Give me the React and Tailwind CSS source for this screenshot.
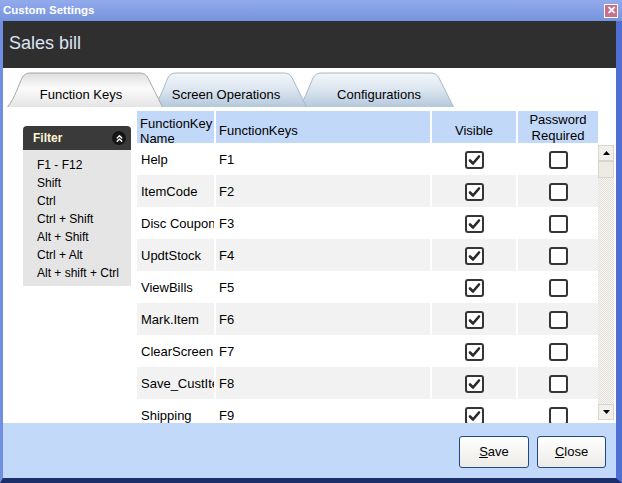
import { ChevronsUp } from 'lucide-react';

const font = { fontFamily: '"Liberation Sans", Arial, sans-serif' };

const rows = [
  ['Help', 'F1'],
  ['ItemCode', 'F2'],
  ['Disc Coupon', 'F3'],
  ['UpdtStock', 'F4'],
  ['ViewBills', 'F5'],
  ['Mark.Item', 'F6'],
  ['ClearScreen', 'F7'],
  ['Save_CustItem', 'F8'],
  ['Shipping', 'F9'],
];

const filters = ['F1 - F12', 'Shift', 'Ctrl', 'Ctrl + Shift', 'Alt + Shift', 'Ctrl + Alt', 'Alt + shift + Ctrl'];

const Tab = ({ label, active, className, textClass }) => (
  <div className={`relative h-[35px] ${className}`}>
    <svg className="absolute inset-0" width="100%" height="35" viewBox="0 0 156 35" preserveAspectRatio="none">
      <defs>
        <linearGradient id={active ? 'ta' : 'ti'} x1="0" y1="0" x2="0" y2="1">
          {active ? (
            <>
              <stop offset="0" stopColor="#dedede" />
              <stop offset="0.45" stopColor="#fbfbfb" />
              <stop offset="1" stopColor="#e4e4e4" />
            </>
          ) : (
            <>
              <stop offset="0" stopColor="#f2f6fa" />
              <stop offset="0.5" stopColor="#dbe5ef" />
              <stop offset="1" stopColor="#b4c8dc" />
            </>
          )}
        </linearGradient>
      </defs>
      <path
        d="M0.5 35 C8 26 12 12 15 6 Q17.5 1 23 1 L133 1 Q138.5 1 141 6 L155.5 35"
        fill={`url(#${active ? 'ta' : 'ti'})`}
        stroke={active ? '#a8a8a8' : '#a7b6c6'}
        strokeWidth="1"
      />
    </svg>
    <div className={`relative flex h-full items-end justify-center pb-[3px] text-[13px] text-black ${textClass}`}>{label}</div>
  </div>
);

const Check = ({ checked }) => (
  <div className="flex h-[18px] w-[19px] items-center justify-center rounded-[3px] border-[2.5px] border-[#353535] bg-white">
    {checked && (
      <svg width="13" height="12" viewBox="0 0 13 12">
        <path d="M2 6.5 L5 9.5 L11 2.5" fill="none" stroke="#2a2a2a" strokeWidth="2.6" strokeLinecap="round" strokeLinejoin="round" />
      </svg>
    )}
  </div>
);

const Arrow = ({ up }) => (
  <div className="flex h-[16px] w-[16px] items-center justify-center border border-[#d8d6cc] bg-[#f1f0ea]">
    <svg width="7" height="4" viewBox="0 0 7 4">
      <path d={up ? 'M0 4 L3.5 0 L7 4 Z' : 'M0 0 L3.5 4 L7 0 Z'} fill="#000" />
    </svg>
  </div>
);

const Btn = ({ children, w }) => (
  <button className={`flex h-[32px] ${w} items-center justify-center rounded-[3px] border border-[#1d4a80] bg-gradient-to-b from-[#ffffff] to-[#ecebe6] text-[13px] text-black`}>
    {children}
  </button>
);

export default function App() {
  return (
    <div className="flex h-[483px] w-[622px] flex-col bg-[#7b98e0]" style={font}>
      {/* title bar */}
      <div className="flex h-[21px] shrink-0 items-center justify-between bg-gradient-to-b from-[#92abec] to-[#7693dd] pl-[3px] pr-[4px]">
        <span className="text-[11.5px] font-bold text-white">Custom Settings</span>
        <div className="flex h-[14px] w-[14px] items-center justify-center border border-white bg-[#c7708e] text-[11px] font-bold leading-none text-white">✕</div>
      </div>

      <div className="flex flex-1 flex-col border-b-[5px] border-l-[3px] border-r-[6px] border-b-[#1c2f6a] border-l-[#6f90e2] border-r-[#4f6fd3]">
        {/* header band */}
        <div className="flex h-[47px] shrink-0 items-center bg-[#2f2f2f] pl-[6px] pb-[2px]">
          <span className="text-[18px] text-[#dde4f3]">Sales bill</span>
        </div>

        {/* main */}
        <div className="flex h-[355px] flex-col bg-white">
          <div className="flex h-[39px] shrink-0 items-end pl-[4px]">
            <Tab label="Function Keys" active className="z-20 w-[156px]" textClass="pr-[8px]" />
            <Tab label="Screen Operations" className="z-10 -ml-[10px] w-[154px]" textClass="pr-[8px]" />
            <Tab label="Configurations" className="z-0 -ml-[9px] w-[156px]" textClass="pl-[6px]" />
          </div>

          <div className="flex flex-1 overflow-hidden">
            {/* filter panel */}
            <div className="ml-[20px] mt-[19px] w-[108px] shrink-0 self-start">
              <div className="flex h-[24px] items-center justify-between rounded-t-[4px] bg-[#3a3a3a] pl-[10px] pr-[5px]">
                <span className="text-[12px] font-bold text-[#fff6d8]">Filter</span>
                <div className="flex h-[14px] w-[14px] items-center justify-center rounded-full bg-[#151515]">
                  <ChevronsUp size={11} strokeWidth={3} color="#ffffff" />
                </div>
              </div>
              <div className="flex h-[136px] flex-col bg-[#e5e5e5] pl-[14px] pt-[6px] text-[12px] leading-[18px] text-black">
                {filters.map((f) => (
                  <span key={f}>{f}</span>
                ))}
              </div>
            </div>

            {/* grid */}
            <div className="ml-[6px] mt-[4px] flex w-[477px] flex-col">
              <div className="flex h-[32px] shrink-0 bg-[#c2d8f8] text-[13px] leading-[15px] text-black">
                <div className="w-[79px] overflow-hidden border-r-2 border-white pl-[3px] pt-[5px]">FunctionKey Name</div>
                <div className="flex w-[216px] items-center border-r-2 border-white pl-[3px] pt-[7px]">FunctionKeys</div>
                <div className="flex w-[86px] items-center justify-center border-r-2 border-white pt-[7px]">Visible</div>
                <div className="flex w-[80px] flex-col items-center justify-center pt-[1px] leading-[16px]">
                  <span>Password</span>
                  <span>Required</span>
                </div>
                <div className="w-[16px] bg-white" />
              </div>
              <div className="flex flex-1 overflow-hidden">
                <div className="flex w-[461px] flex-col overflow-hidden">
                  {rows.map(([name, key], i) => (
                    <div key={name} className={`flex h-[32px] shrink-0 text-[13px] text-black ${i % 2 ? 'bg-[#f2f2f2]' : 'bg-white'}`}>
                      <div className="flex w-[79px] items-center overflow-hidden whitespace-nowrap border-r-2 border-white pl-[4px] pt-[2px]">{name}</div>
                      <div className="flex w-[216px] items-center border-r-2 border-white pl-[3px] pt-[2px]">{key}</div>
                      <div className="flex w-[86px] items-center justify-center border-r-2 border-white pt-[1px]">
                        <Check checked />
                      </div>
                      <div className="flex w-[80px] items-center justify-center pt-[1px]">
                        <Check />
                      </div>
                    </div>
                  ))}
                </div>
                <div className="flex w-[16px] flex-col pt-[2px] pb-[3px]">
                  <Arrow up />
                  <div className="h-[17px] border border-[#d8d6cc] bg-[#ecebe4]" />
                  <div className="flex-1 bg-[repeating-conic-gradient(#f7f6f2_0_25%,#e2e0d8_0_50%)] bg-[length:2px_2px]" />
                  <Arrow />
                </div>
              </div>
            </div>
          </div>
        </div>

        {/* footer */}
        <div className="flex flex-1 items-start justify-end gap-[8px] bg-[#c3d9f9] pr-[10px] pt-[13px]">
          <Btn w="w-[70px]">
            <span><span className="underline">S</span>ave</span>
          </Btn>
          <Btn w="w-[69px]">
            <span><span className="underline">C</span>lose</span>
          </Btn>
        </div>
      </div>
    </div>
  );
}
